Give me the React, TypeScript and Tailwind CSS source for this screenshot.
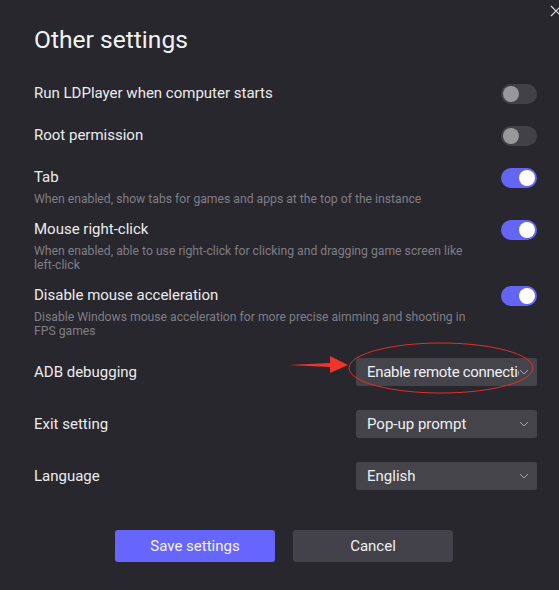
import { ReactNode } from "react";

const Toggle = ({ on }: { on: boolean }) => (
  <div
    className={`mt-[1px] flex h-[20px] w-[36px] shrink-0 items-center rounded-full px-[2px] ${on ? "justify-end bg-[#6565f5]" : "justify-start bg-[#424147]"}`}
  >
    <div className={`h-[16px] w-[16px] rounded-full ${on ? "bg-white" : "bg-[#98979c]"}`} />
  </div>
);

const SwitchRow = ({ label, desc, on }: { label: string; desc?: ReactNode; on: boolean }) => (
  <div className="flex items-start justify-between">
    <div className="w-[440px]">
      <div className="text-[15px] leading-[20px] text-[#ececee]">{label}</div>
      {desc && <div className="mt-[5px] text-[12.2px] leading-[14px] text-[#7f7e85]">{desc}</div>}
    </div>
    <Toggle on={on} />
  </div>
);

const Chevron = () => (
  <svg width="10" height="6" viewBox="0 0 10 6" className="shrink-0">
    <path d="M1 1 L5 5 L9 1" fill="none" stroke="#a9a8ae" strokeWidth="1" />
  </svg>
);

const SelectRow = ({ label, value, tight }: { label: string; value: string; tight?: boolean }) => (
  <div className="flex items-center justify-between">
    <div className="text-[15px] leading-[20px] text-[#ececee]">{label}</div>
    <div className="flex h-[28px] w-[181px] items-center rounded-[3px] bg-[#45444b] pl-[11px] pr-[8px]">
      <div
        className={`flex-1 overflow-hidden whitespace-nowrap text-[15px] text-[#f0f0f2] ${tight ? "tracking-[-0.3px]" : ""}`}
      >
        {value}
      </div>
      <Chevron />
    </div>
  </div>
);

export default function App() {
  return (
    <div className="relative h-[590px] w-[559px] overflow-hidden bg-[#28272d] pl-[34px] pr-[22px] pt-[24px] font-['Roboto',sans-serif]">
      <svg width="12" height="12" viewBox="0 0 12 12" className="absolute right-[-3px] top-[5px]">
        <path d="M1 1 L11 11 M11 1 L1 11" stroke="#d8d8dc" strokeWidth="1.2" />
      </svg>

      <h1 className="text-[24.6px] leading-[32px] text-[#f2f2f4]">Other settings</h1>

      <div className="mt-[27px] flex flex-col">
        <SwitchRow label="Run LDPlayer when computer starts" on={false} />
        <div className="h-[21px]" />
        <SwitchRow label="Root permission" on={false} />
        <div className="h-[21px]" />
        <SwitchRow label="Tab" desc="When enabled, show tabs for games and apps at the top of the instance" on />
        <div className="h-[13px]" />
        <SwitchRow
          label="Mouse right-click"
          desc="When enabled, able to use right-click for clicking and dragging game screen like left-click"
          on
        />
        <div className="h-[13px]" />
        <SwitchRow
          label="Disable mouse acceleration"
          desc="Disable Windows mouse acceleration for more precise aimming and shooting in FPS games"
          on
        />
      </div>

      <div className="mt-[20px] flex flex-col gap-[24px]">
        <SelectRow label="ADB debugging" value="Enable remote connection" tight />
        <SelectRow label="Exit setting" value="Pop-up prompt" />
        <SelectRow label="Language" value="English" />
      </div>

      <div className="mt-[40px] flex justify-center gap-[18px] pr-[3px]">
        <button className="h-[32px] w-[160px] rounded-[3px] bg-[#6666ff] text-[15px] text-[#f4f4ff]">Save settings</button>
        <button className="h-[32px] w-[160px] rounded-[3px] bg-[#43424a] text-[15px] text-[#f0f0f2]">Cancel</button>
      </div>

      {/* annotation: arrow + ellipse */}
      <svg width="62" height="20" viewBox="0 0 62 20" className="absolute left-[288px] top-[355px]">
        <path d="M0 10 L42 8 L42 1 L60 10 L42 18 L42 12 Z" fill="#f0342c" />
      </svg>
      <svg width="190" height="54" viewBox="0 0 190 54" className="absolute left-[346px] top-[341px]">
        <ellipse cx="95" cy="27" rx="92" ry="25" fill="none" stroke="#e0302a" strokeWidth="1" />
      </svg>
    </div>
  );
}
